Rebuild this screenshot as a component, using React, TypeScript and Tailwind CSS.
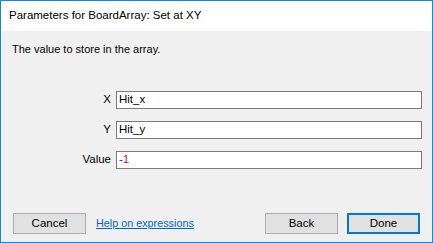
import React from 'react';

const font = { fontFamily: '"Liberation Sans", Arial, sans-serif' };

const Field: React.FC<{ label: string; children: React.ReactNode }> = ({ label, children }) => (
  <div className="flex items-center gap-[5px]">
    <span className="w-[110px] text-right text-[11.5px] text-black">{label}</span>
    <div className="w-[306px] h-[18px] bg-white border border-[#7a7a7a] flex items-center px-[2px] text-[11.5px] text-black">
      {children}
    </div>
  </div>
);

const Button: React.FC<{ label: string; primary?: boolean }> = ({ label, primary }) => (
  <button
    className={
      primary
        ? 'w-[73px] h-[21px] bg-[#e1e1e1] border-2 border-[#0078d7] text-[11.5px] text-black'
        : 'w-[73px] h-[21px] bg-[#e1e1e1] border border-[#adadad] text-[11.5px] text-black'
    }
  >
    {label}
  </button>
);

export default function App() {
  return (
    <div style={font} className="w-[433px] h-[243px] border border-[#1883d7] flex flex-col bg-[#f0f0f0]">
      <div className="h-[30px] bg-white flex items-center px-[8px] text-[11.5px] text-black">
        Parameters for BoardArray: Set at XY
      </div>
      <div className="flex-1 flex flex-col">
        <div className="pt-[10px] pl-[11px] text-[11px] leading-[16px] text-black">The value to store in the array.</div>
        <div className="mt-[34px] flex flex-col gap-[12px]">
          <Field label="X">Hit_x</Field>
          <Field label="Y">Hit_y</Field>
          <Field label="Value">
            <span className="text-[#2020ff]">-</span>
            <span className="text-[#c000c0]">1</span>
          </Field>
        </div>
        <div className="mt-auto pb-[8px] px-[12px] flex items-center">
          <Button label="Cancel" />
          <a className="ml-[10px] text-[10.8px] text-[#0066cc] underline">Help on expressions</a>
          <div className="ml-auto flex gap-[9px]">
            <Button label="Back" />
            <Button label="Done" primary />
          </div>
        </div>
      </div>
    </div>
  );
}
